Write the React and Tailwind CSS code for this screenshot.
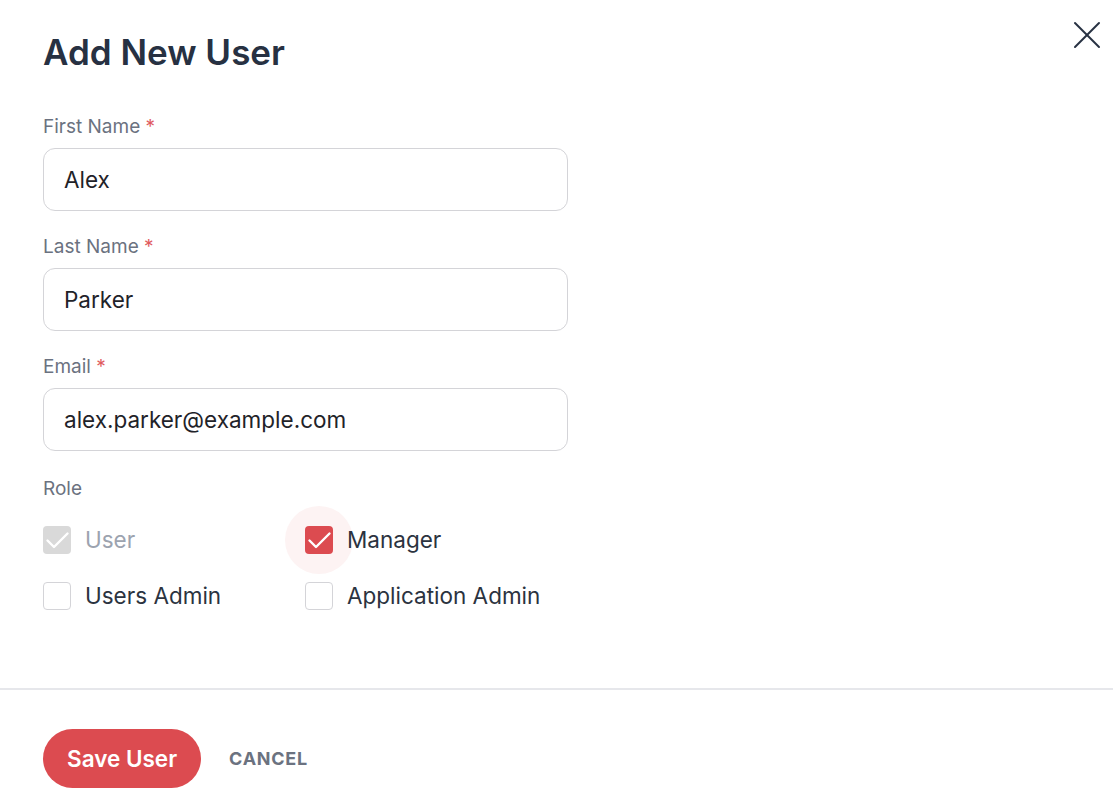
import { useState } from "react";
import { X } from "lucide-react";

const fields = [
  { label: "First Name", value: "Alex" },
  { label: "Last Name", value: "Parker" },
  { label: "Email", value: "alex.parker@example.com" },
];

function CheckMark() {
  return (
    <svg viewBox="0 0 28 28" className="w-[28px] h-[28px]" fill="none">
      <path
        d="M4.5 14.5 11 21 24.5 7.5"
        stroke="white"
        strokeWidth="2.4"
        strokeLinecap="round"
        strokeLinejoin="round"
      />
    </svg>
  );
}

function RoleCheckbox({ label, checked, disabled, focused }) {
  return (
    <label className="flex items-center gap-[14px] cursor-pointer h-[28px]">
      <span className="relative flex items-center justify-center w-[28px] h-[28px]">
        {focused && (
          <span className="absolute w-[68px] h-[68px] rounded-full bg-[#fdf3f3]" />
        )}
        <span
          className={
            disabled
              ? "relative flex items-center justify-center w-[28px] h-[28px] rounded-[4px] bg-[#d9d9d9]"
              : checked
              ? "relative flex items-center justify-center w-[28px] h-[28px] rounded-[4px] bg-[#dc4b50]"
              : "relative flex items-center justify-center w-[28px] h-[28px] rounded-[4px] border border-[#d4d4d8] bg-white"
          }
        >
          {checked && <CheckMark />}
        </span>
      </span>
      <span
        className={
          disabled
            ? "relative text-[22.5px] leading-[28px] text-[#9ca3af]"
            : "relative text-[22.5px] leading-[28px] text-[#2b3340]"
        }
      >
        {label}
      </span>
    </label>
  );
}

export default function App() {
  const [values, setValues] = useState(fields.map((f) => f.value));

  return (
    <div
      className="relative w-[1113px] h-[812px] bg-white overflow-hidden"
      style={{ fontFamily: "Inter, 'Noto Sans', sans-serif" }}
    >
      <button className="absolute top-[11px] right-[2px] text-[#273142]">
        <X className="w-[48px] h-[48px]" strokeWidth={1} />
      </button>

      <div className="px-[43px] pt-[30px]">
        <h1 className="text-[35px] font-semibold text-[#273142] leading-[44px]">
          Add New User
        </h1>

        <div className="mt-[40px] flex flex-col gap-[23px]">
          {fields.map((f, i) => (
            <div key={f.label} className="flex flex-col gap-[8px]">
              <span className="text-[19px] leading-[26px] text-[#6b7280]">
                {f.label} <span className="text-[#e05a5e]">*</span>
              </span>
              <input
                value={values[i]}
                onChange={(e) => {
                  const next = [...values];
                  next[i] = e.target.value;
                  setValues(next);
                }}
                className="w-[525px] h-[63px] rounded-[12px] border border-[#d4d4d8] px-[20px] text-[22.5px] text-[#1f2329] outline-none"
              />
            </div>
          ))}
        </div>

        <div className="mt-[25px] text-[19px] leading-[26px] text-[#6b7280]">Role</div>
        <div className="mt-[24px] grid grid-cols-[262px_1fr] gap-y-[28px] w-[525px]">
          <RoleCheckbox label="User" checked disabled />
          <RoleCheckbox label="Manager" checked focused />
          <RoleCheckbox label="Users Admin" />
          <RoleCheckbox label="Application Admin" />
        </div>
      </div>

      <div className="mt-[78px] border-t-2 border-[#e6e7eb]" />

      <div className="px-[43px] pt-[39px] flex items-center gap-[28px]">
        <button className="h-[59px] px-[24px] rounded-full bg-[#dc4b50] text-white text-[22.5px] font-semibold">
          Save User
        </button>
        <button className="text-[18px] font-bold tracking-[0.04em] text-[#6b7280]">
          CANCEL
        </button>
      </div>
    </div>
  );
}
